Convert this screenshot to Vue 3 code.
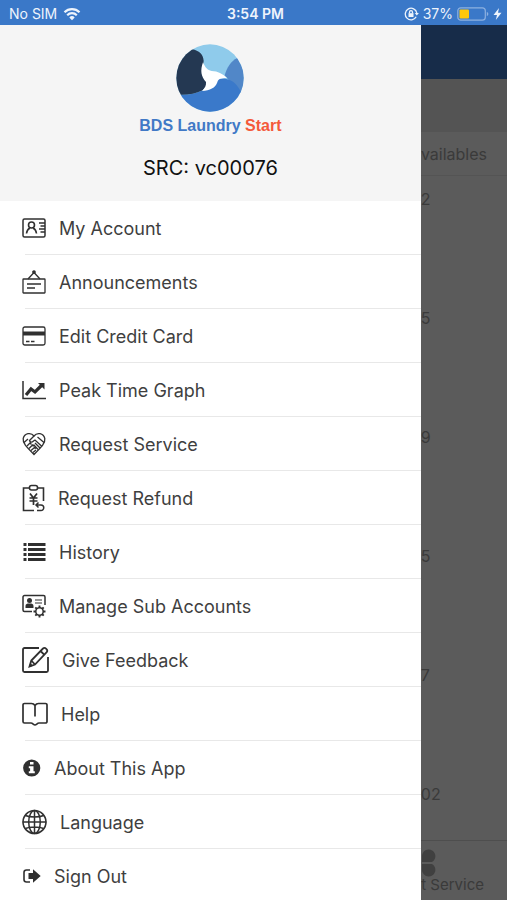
<script setup>
import { ref } from 'vue'

const menuItems = ref([
  {
    name: 'My Account',
    width: 24,
    height: 20,
    icon: `<rect x="1" y="1" width="22" height="18" rx="1.5" stroke-width="1.500"/>
      <circle cx="9.500" cy="7" r="3" stroke-width="1.600"/>
      <path d="M4.500 15.500c.3-3.200 1.600-4.500 3.400-5.500M14.500 15.500c-.3-3.200-1.600-4.500-3.400-5.500" stroke-width="1.600"/>
      <path d="M17 5h6M18.500 8h4.500M17 11h6M18.500 14h4.500"/>`
  },
  {
    name: 'Announcements',
    width: 24,
    height: 24,
    icon: `<rect x="1" y="9" width="22" height="14" rx=".5"/>
      <path d="M6 9l6-6.500L18 9M5 14h14M5 18h8"/>
      <circle cx="12" cy="2" r="1.200" fill="currentColor"/>`
  },
  {
    name: 'Edit Credit Card',
    width: 24,
    height: 20,
    icon: `<rect x="1" y="1" width="22" height="18" rx="1.800"/>
      <path d="M1 5.500h22v4H1z" fill="currentColor" stroke="none"/>
      <path d="M4 15.500h3.500M9 15.500h3.500"/>`
  },
  {
    name: 'Peak Time Graph',
    width: 24,
    height: 20,
    icon: `<path d="M1 1v17.500h23" stroke-width="1.500"/>
      <path d="M4 15l5-6 4 3 6.500-6.500" stroke-width="3.200"/>
      <path d="M16 3h6.500v6.500z" fill="currentColor" stroke="none"/>`
  },
  {
    name: 'Request Service',
    width: 24,
    height: 24,
    icon: `<path d="M12 4C9 0 2.500 1 1.200 6.500.5 11 4 14.500 12 22.500 20 14.500 23.500 11 22.800 6.500 21.500 1 15 0 12 4z"/>
      <path d="M12 4L7.500 8.500c.5 2 2.500 2 4 .5l1.500-1 7 6.500M2 10.500l4-3.500M22 10.500L15.500 5M5 14l3-3 1.500 1.500M7 16.500l3.500-3.500 1 1.500M9 18.500l3.500-3 1 1.500M11 20.500l3-2.500M13 11l5 5M11.500 12.500l4.500 5"/>`
  },
  {
    name: 'Request Refund',
    width: 23,
    height: 28,
    icon: `<path d="M7 4H1.500v22.500H12M16 4h5.500v13" stroke-width="1.600"/>
      <rect x="7.500" y="1.500" width="8" height="4.500" rx="2" stroke-width="1.600"/>
      <path d="M8 9.500l3.500 4.500L15 9.500M7.500 14h8M7.500 17h8M11.500 14v7" stroke-width="1.700"/>
      <path d="M14 21h5a2.700 2.700 0 0 1 0 5.500h-4M16.500 18.500L14 21l2.500 2.500" stroke-width="1.500"/>`
  },
  {
    name: 'History',
    width: 24,
    height: 20,
    icon: `<path d="M1.500 2.500h3M1.500 7.500h3M1.500 12.500h3M1.500 17.500h3M6 2.500h17.500M6 7.500h17.500M6 12.500h17.500M6 17.500h17.500" stroke-width="3.200"/>`
  },
  {
    name: 'Manage Sub Accounts',
    width: 24,
    height: 24,
    icon: `<path d="M10 17.500H2.500A1.500 1.500 0 0 1 1 16V3a1.500 1.500 0 0 1 1.500-1.500h19A1.500 1.500 0 0 1 23 3v8" stroke-width="1.500"/>
      <circle cx="7.500" cy="6.500" r="2.500" fill="currentColor" stroke="none"/>
      <path d="M3.500 14v-2c0-2 1.500-2.500 4-2.500s4 .5 4 2.500v2z" fill="currentColor" stroke="none"/>
      <path d="M13 6h7M13 9h7" stroke-width="1.200"/>
      <circle cx="17.500" cy="17.500" r="3.700" stroke-width="1.500"/>
      <path d="M17.500 11.500V14M17.500 21v2.500M11.500 17.500H14M21 17.500h2.500M13.300 13.300l1.700 1.700M20 20l1.700 1.700M13.300 21.700L15 20M20 15l1.700-1.700" stroke-width="1.900"/>`
  },
  {
    name: 'Give Feedback',
    width: 27,
    height: 28,
    icon: `<path d="M17 2H2.500A1.500 1.500 0 0 0 1 3.500v21A1.500 1.500 0 0 0 2.500 26h22a1.500 1.500 0 0 0 1.500-1.500V11" stroke-width="1.800"/>
      <path d="M7.500 20.500l1.800-6L21 2.500c2-1.700 5.500 1.500 3.700 3.700L13 18.500zM18.500 5l3.700 3.700M9.300 14.500l3.700 4" stroke-width="1.800"/>
      <path d="M7 21l1.200-4.200 3 3z" fill="currentColor" stroke="none"/>`
  },
  {
    name: 'Help',
    width: 26,
    height: 24,
    icon: `<path d="M13 3.500v11M13 3.500C12 2 11 1.500 9.500 1.500h-7A1.500 1.500 0 0 0 1 3v16.500A1.500 1.500 0 0 0 2.500 21H9c1.800 0 2.500 2 4 2s2.200-2 4-2h6.500a1.500 1.500 0 0 0 1.500-1.500V3a1.500 1.500 0 0 0-1.500-1.500h-7C15 1.500 14 2 13 3.500z" stroke-width="1.700"/>`
  },
  {
    name: 'About This App',
    width: 19,
    height: 18,
    icon: `<circle cx="9.700" cy="9" r="8.600" fill="currentColor" stroke="none"/>
      <path d="M8 3h3.500v2.600H8zM6.800 7.300h4.700v5h1.300v2H6.800v-2h1.300v-3H6.800z" fill="#fff" stroke="none"/>`
  },
  {
    name: 'Language',
    width: 25,
    height: 26,
    icon: `<circle cx="12.500" cy="13" r="11.500" stroke-width="1.600"/>
      <ellipse cx="12.500" cy="13" rx="5.800" ry="11.500" stroke-width="1.500"/>
      <path d="M12.500 1.300v23.400M.8 13h23.400M3.300 6.500c5 2 13.400 2 18.400 0M3.300 19.500c5-2 13.400-2 18.400 0" stroke-width="1.500"/>`
  },
  {
    name: 'Sign Out',
    width: 19,
    height: 16,
    icon: `<path d="M8 2H4.500A2.500 2.500 0 0 0 2 4.500v7A2.500 2.500 0 0 0 4.500 14H8" stroke-width="1.600"/>
      <path d="M6.500 5H11V1.200L18.700 8 11 14.800V11H6.500z" fill="currentColor" stroke="none"/>`
  }
])

const counts = ref(['2', '5', '9', '5', '7', '02'])
</script>

<template>
  <div class="app">
    <header class="statusBar">
      <div class="carrier">
        <span>No SIM</span>
        <svg width="18" height="14" viewBox="0 0 18 14" fill="none" stroke="currentColor" stroke-width="2.2">
          <path d="M1.500 5.200a10.600 10.600 0 0 1 15 0M4.200 8.200a6.800 6.800 0 0 1 9.600 0" />
          <path d="M6.300 10.400a3.800 3.800 0 0 1 5.400 0L9 13.200z" fill="currentColor" stroke="none" />
        </svg>
      </div>
      <span class="clock">3:54 PM</span>
      <div class="power">
        <svg width="15" height="14" viewBox="0 0 15 14" fill="none" stroke="currentColor" stroke-width="1.3">
          <path d="M12.200 9.800A5.800 5.800 0 1 1 12.800 6" />
          <path d="M10.700 6h4.200l-2.100 2.600z" fill="currentColor" stroke="none" />
          <rect x="4.500" y="6.200" width="5" height="3.800" fill="currentColor" stroke="none" />
          <path d="M5.500 6.500V5.200a1.500 1.500 0 0 1 3 0v1.300" />
        </svg>
        <span>37%</span>
        <svg width="32" height="14" viewBox="0 0 32 14">
          <rect x=".8" y=".8" width="27.500" height="12.400" rx="3" fill="none" stroke="#8db1e0" stroke-width="1.2" />
          <path d="M29.800 5v4c1-.3 1.500-1 1.500-2s-.5-1.700-1.500-2z" fill="#8db1e0" />
          <rect x="2.500" y="2.500" width="9.500" height="9" rx="1" fill="#fdc70a" />
        </svg>
        <svg width="9" height="12" viewBox="0 0 9 12">
          <path d="M6 0L.5 7H4l-1.200 5L8.500 4.700H5z" fill="currentColor" />
        </svg>
      </div>
    </header>

    <div class="body">
      <aside class="drawer">
        <div class="profile">
          <svg class="logo" width="68" height="68" viewBox="168 43 204 204">
            <defs>
              <clipPath id="logoCircle"><circle cx="270" cy="145" r="101" /></clipPath>
            </defs>
            <g clip-path="url(#logoCircle)">
              <path d="M168 43h204v204H168z" fill="#8fcbeb" />
              <path d="M352 85c-20 10-31 28-38 52l50 60 20-50z" fill="#5187c8" />
              <path d="M168 194c35 4 58-2 82-13 25-22 38-38 66-34 24 4 38 20 48 42l8 58H168z" fill="#3a79ca" />
              <path d="M168 43l48 16c22 4 33 14 35 34l-3 35 14 38-14 16c-24 12-48 15-80 13z" fill="#243852" />
              <path d="M249 98c7 16 13 24 26 26 19 1 32 8 46 21-17 0-26 2-29 13-6 17-22 25-46 26 9-9 13-16 12-27-15-16-18-34-9-59z" fill="#fff" />
            </g>
          </svg>
          <div class="brand">BDS Laundry <span class="brandAccent">Start</span></div>
          <div class="source">SRC: vc00076</div>
        </div>

        <nav class="menu">
          <a v-for="item in menuItems" :key="item.name" href="#" class="menuItem">
            <svg
              :width="item.width"
              :height="item.height"
              :viewBox="`0 0 ${ item.width } ${ item.height }`"
              class="menuIcon"
              aria-hidden="true"
              v-html="item.icon"
            />
            <span>{{ item.name }}</span>
          </a>
        </nav>
      </aside>

      <main class="page">
        <div class="navBar"></div>
        <div class="filterBar"></div>
        <div class="columnHead">vailables</div>
        <ul class="counts">
          <li v-for="(count, index) in counts" :key="index">{{ count }}</li>
        </ul>
        <div class="tabBar">
          <svg class="tabIcon" width="16" height="28" viewBox="0 0 16 28" aria-hidden="true">
            <path d="M1 13V7a6.700 6.700 0 1 1 10 6zM1 15h10a6.700 6.700 0 1 1-10 6z" fill="currentColor" />
          </svg>
          <span class="tabLabel">t Service</span>
        </div>
      </main>
    </div>
  </div>
</template>

<style>
  body {
    margin: 0;
  }
</style>

<style scoped>
  .app {
    display: flex;
    flex-direction: column;
    height: 100vh;
    overflow: hidden;
    font-family: Inter, "Liberation Sans", sans-serif;
  }

  .statusBar {
    display: grid;
    grid-template-columns: 1fr auto 1fr;
    align-items: center;
    flex: none;
    height: 25px;
    padding: 2px 5px 0 9px;
    box-sizing: border-box;
    background-color: #3a78c8;
    color: #eef4fc;
    font-size: 14px;
  }

  .carrier,
  .power {
    display: flex;
    align-items: center;
    gap: 6px;
  }

  .power {
    justify-content: flex-end;
    gap: 4px;
  }

  .clock {
    font-weight: 600;
  }

  .body {
    display: flex;
    flex: 1;
    min-height: 0;
  }

  .drawer {
    flex: none;
    width: 83%;
    overflow-y: auto;
    scrollbar-width: none;
    background-color: #fff;
  }

  .profile {
    display: flex;
    flex-direction: column;
    align-items: center;
    height: 176px;
    padding-top: 19px;
    box-sizing: border-box;
    background-color: #f5f5f5;
  }

  .brand {
    margin-top: 4px;
    font-family: "Liberation Sans", Arial, sans-serif;
    font-size: 16px;
    font-weight: 700;
    line-height: 20px;
    color: #4179c6;
  }

  .brandAccent {
    color: #f4593a;
  }

  .source {
    margin-top: 20px;
    font-size: 20px;
    line-height: 24px;
    color: #111;
  }

  .menuItem {
    display: flex;
    align-items: center;
    gap: 13px;
    height: 54px;
    padding-left: 22px;
    color: #3f3f3f;
    font-size: 18px;
    text-decoration: none;
    background: linear-gradient(#e8e8e8, #e8e8e8) 25px 100% / 100% 1px no-repeat;
  }

  .menuIcon {
    flex: none;
    fill: none;
    stroke: currentColor;
    stroke-width: 1.3;
    color: #303030;
  }

  .page {
    display: flex;
    flex: 1;
    flex-direction: column;
    min-width: 0;
    overflow: hidden;
    background-color: #5b5b5b;
    color: #3a3a3a;
    font-size: 16px;
  }

  .navBar {
    flex: none;
    height: 54px;
    background-color: #172c49;
  }

  .filterBar {
    flex: none;
    height: 53px;
    background-color: #545454;
  }

  .columnHead {
    display: flex;
    flex: none;
    justify-content: flex-end;
    height: 43px;
    padding-right: 20px;
    line-height: 44px;
    border-bottom: 1px solid #545454;
  }

  .counts {
    flex: 1;
    min-height: 0;
    margin: 0;
    padding: 0;
    overflow: hidden;
    list-style: none;
  }

  .counts li {
    height: 119px;
    padding-top: 11px;
    box-sizing: border-box;
    line-height: 24px;
  }

  .tabBar {
    display: flex;
    flex: none;
    flex-direction: column;
    height: 60px;
    padding-top: 8px;
    box-sizing: border-box;
    border-top: 1px solid #4e4e4e;
  }

  .tabIcon {
    flex: none;
    color: #404040;
  }

  .tabLabel {
    align-self: flex-end;
    padding-right: 23px;
    font-size: 15px;
    line-height: 16px;
    white-space: nowrap;
  }
</style>
